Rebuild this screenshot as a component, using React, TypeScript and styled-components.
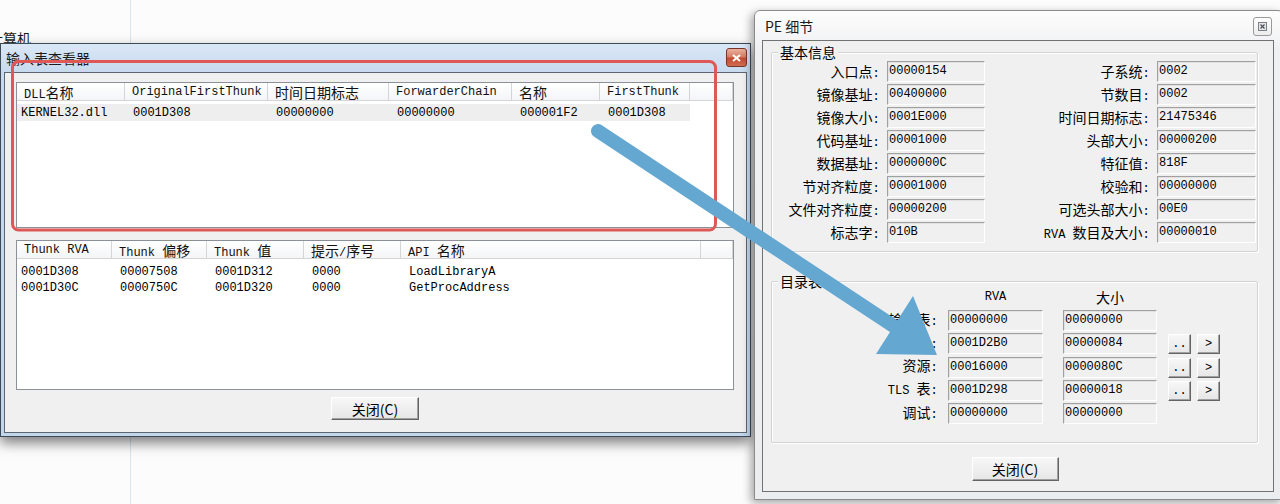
import React from 'react'
import styled, { createGlobalStyle } from 'styled-components'

const MONO = `'Liberation Mono', 'Noto Sans CJK SC', monospace`
const CJK = `'Noto Sans CJK SC', 'Liberation Sans', sans-serif`

const GlobalStyle = createGlobalStyle`
  html, body {
    margin: 0;
    padding: 0;
    background: #fcfcfc;
    overflow: hidden;
  }
  body {
    font-family: ${CJK};
  }
`

const Desktop = styled.div`
  position: relative;
  width: 1280px;
  height: 504px;
  overflow: hidden;
  background: #fcfcfc;
  display: flex;
`

const Sidebar = styled.div`
  width: 131px;
  box-sizing: border-box;
  border-right: 1px solid #d9e4ef;
  padding-top: 30px;
`

const TreeText = styled.div`
  margin-left: -11px;
  font: 14px/16px ${CJK};
  color: #1a1a1a;
`

const CjkRun = styled.span`
  font-family: ${CJK};
  font-size: 14px;
`

const mixed = (text: string) =>
  text.split(/([\u3400-\u9fff]+)/).map((part, i) =>
    /[\u3400-\u9fff]/.test(part) ? <CjkRun key={i}>{part}</CjkRun> : part
  )

/* ---------- import viewer window ---------- */

const ImportWindow = styled.div`
  position: absolute;
  left: 0;
  top: 43px;
  z-index: 1;
  width: 751px;
  height: 394px;
  box-sizing: border-box;
  border: 1px solid #3e4a56;
  background: linear-gradient(#dae7f6, #c6d9ee 30px, #c2d6ec);
  box-shadow: 0 6px 12px rgba(0, 0, 0, 0.5);
  padding: 0 3px 3px 3px;
  display: flex;
  flex-direction: column;
`

const TitleBar = styled.div<{ $h: number }>`
  height: ${p => p.$h}px;
  flex: none;
  display: flex;
  align-items: center;
`

const TitleText = styled.span<{ $pad: number }>`
  padding-left: ${p => p.$pad}px;
  font: 14px/16px ${CJK};
  color: #1b1b1b;
`

const RedClose = styled.div`
  margin-left: auto;
  align-self: flex-start;
  margin-top: 4px;
  width: 21px;
  height: 19px;
  box-sizing: border-box;
  border: 1px solid #7a3426;
  border-radius: 3px;
  background: linear-gradient(#eab09c, #d67b63 48%, #c2492f 52%, #cf6d52);
  display: flex;
  align-items: center;
  justify-content: center;
`

const GreyClose = styled.div`
  margin-left: auto;
  margin-right: 2px;
  align-self: flex-start;
  margin-top: 6px;
  width: 19px;
  height: 19px;
  box-sizing: border-box;
  border: 1px solid #9a9a9a;
  border-radius: 3px;
  background: linear-gradient(#ffffff, #ececec);
  display: flex;
  align-items: center;
  justify-content: center;
`

const ImportClient = styled.div`
  flex: 1;
  background: #f0f0f0;
  border: 1px solid #5c6670;
  padding: 9px 12px 10px 11px;
  display: flex;
  flex-direction: column;
`

const ListView = styled.div<{ $h: number; $mt?: number }>`
  height: ${p => p.$h}px;
  margin-top: ${p => p.$mt ?? 0}px;
  flex: none;
  box-sizing: border-box;
  border: 1px solid #8c9098;
  background: #ffffff;
  overflow: hidden;
`

const HeaderRow = styled.div`
  display: flex;
  height: 18px;
  box-sizing: border-box;
  border-bottom: 1px solid #d5d5d5;
  background: linear-gradient(#ffffff, #f4f5f7);
`

const HeaderCell = styled.div<{ $w?: number }>`
  ${p => (p.$w ? `width: ${p.$w}px;` : 'flex: 1;')}
  flex-shrink: 0;
  box-sizing: border-box;
  border-right: 1px solid #d5d5d5;
  padding: 2px 0 0 7px;
  font: 12px/15px ${MONO};
  color: #111;
  white-space: pre;
`

const DataRow = styled.div<{ $sel?: boolean; $h: number; $mt: number }>`
  display: flex;
  width: max-content;
  height: ${p => p.$h}px;
  margin-top: ${p => p.$mt}px;
  background: ${p => (p.$sel ? '#eeeeee' : 'transparent')};
`

const DataCell = styled.div<{ $w: number; $pad: number }>`
  width: ${p => p.$w}px;
  box-sizing: border-box;
  padding: 2px 0 0 ${p => p.$pad}px;
  font: 12px/15px ${MONO};
  color: #000;
  white-space: nowrap;
`

const DialogButton = styled.button<{ $w: number; $h: number; $mt: number }>`
  width: ${p => p.$w}px;
  height: ${p => p.$h}px;
  margin-top: ${p => p.$mt}px;
  align-self: center;
  flex: none;
  padding: 0;
  box-sizing: border-box;
  font: 14px/16px ${CJK};
  color: #000;
  background: linear-gradient(#f7f7f7, #e6e6e6);
  border: 1px solid;
  border-color: #ffffff #646464 #646464 #ffffff;
  box-shadow: inset -1px -1px 0 #a0a0a0;
`

/* ---------- PE detail window ---------- */

const DetailWindow = styled.div`
  position: absolute;
  left: 754px;
  top: 10px;
  z-index: 2;
  width: 530px;
  height: 490px;
  box-sizing: border-box;
  border: 1px solid #8a8a8a;
  border-radius: 6px 6px 0 0;
  background: linear-gradient(#fdfdfd, #eff0f2 40px, #ebedef);
  box-shadow: -3px 3px 10px rgba(0, 0, 0, 0.35);
  padding: 0 9px 7px 7px;
  display: flex;
  flex-direction: column;
`

const DetailClient = styled.div`
  flex: 1;
  background: #f0f0f0;
  border: 1px solid #727272;
  padding: 11px 14px 0 8px;
  display: flex;
  flex-direction: column;
`

const GroupBox = styled.div<{ $h: number; $mt: number }>`
  position: relative;
  width: 487px;
  height: ${p => p.$h}px;
  margin-top: ${p => p.$mt}px;
  flex: none;
  box-sizing: border-box;
  border: 1px solid #d3d3d3;
  border-radius: 2px;
  box-shadow: inset 1px 1px 0 #ffffff, 1px 1px 0 #ffffff;
`

const GroupTitle = styled.span`
  position: absolute;
  top: -10px;
  left: 6px;
  padding: 0 2px;
  background: #f0f0f0;
  font: 14px/18px ${CJK};
  color: #000;
`

const InfoGrid = styled.div`
  display: grid;
  grid-template-columns: 115px 98px 172px 99px;
  grid-auto-rows: 21px;
  row-gap: 2px;
  padding-top: 8px;
`

const FieldLabel = styled.div<{ $w?: number; $pad?: number }>`
  ${p => (p.$w ? `width: ${p.$w}px; flex: none;` : '')}
  box-sizing: border-box;
  padding-right: ${p => p.$pad ?? 0}px;
  text-align: right;
  font: 12px/21px ${MONO};
  color: #000;
  white-space: pre;
`

const Field = styled.div<{ $w?: number; $ml?: number }>`
  ${p => (p.$w ? `width: ${p.$w}px; flex: none;` : '')}
  margin-left: ${p => p.$ml ?? 0}px;
  height: 21px;
  box-sizing: border-box;
  border: 1px solid;
  border-color: #a0a0a0 #ffffff #ffffff #a0a0a0;
  box-shadow: inset 1px 1px 0 #e2e2e2;
  background: #f0f0f0;
  padding-left: 1px;
  font: 12px/19px ${MONO};
  color: #000;
  white-space: nowrap;
`

const DirTable = styled.div`
  display: flex;
  flex-direction: column;
  padding-top: 6px;
`

const DirHeader = styled.div`
  display: flex;
  height: 18px;
  margin-bottom: 4px;
`

const ColHead = styled.div<{ $w: number; $ml?: number }>`
  width: ${p => p.$w}px;
  margin-left: ${p => p.$ml ?? 0}px;
  text-align: center;
  font: 12px/18px ${MONO};
  color: #000;
`

const DirRows = styled.div`
  display: flex;
  flex-direction: column;
  gap: 2.25px;
`

const DirRow = styled.div`
  display: flex;
  align-items: center;
  height: 21px;
`

const RowButtons = styled.div`
  display: flex;
  gap: 6px;
  margin-left: 11px;
  margin-top: 1px;
`

const SmallButton = styled.div`
  width: 23px;
  height: 20px;
  box-sizing: border-box;
  border: 1px solid;
  border-color: #ffffff #646464 #646464 #ffffff;
  box-shadow: inset -1px -1px 0 #a0a0a0;
  background: linear-gradient(#f7f7f7, #e6e6e6);
  font: 12px/18px ${MONO};
  text-align: center;
  color: #000;
`

/* ---------- annotation overlay ---------- */

const Overlay = styled.svg`
  position: absolute;
  left: 0;
  top: 0;
  z-index: 3;
  pointer-events: none;
`

const dllCols = [108, 143, 121, 123, 88, 90]
const thunkCols = [95, 95, 97, 97, 300]

const infoRows: [string, string, string, string][] = [
  ['入口点: ', '00000154', '子系统: ', '0002'],
  ['镜像基址: ', '00400000', '节数目: ', '0002'],
  ['镜像大小: ', '0001E000', '时间日期标志: ', '21475346'],
  ['代码基址: ', '00001000', '头部大小: ', '00000200'],
  ['数据基址: ', '0000000C', '特征值: ', '818F'],
  ['节对齐粒度: ', '00001000', '校验和: ', '00000000'],
  ['文件对齐粒度: ', '00000200', '可选头部大小: ', '00E0'],
  ['标志字: ', '010B', 'RVA 数目及大小: ', '00000010'],
]

const dirRows: [string, string, string, boolean][] = [
  ['输出表: ', '00000000', '00000000', false],
  ['输入表: ', '0001D2B0', '00000084', true],
  ['资源: ', '00016000', '0000080C', true],
  ['TLS 表: ', '0001D298', '00000018', true],
  ['调试: ', '00000000', '00000000', false],
]

const thunks = [
  ['0001D308', '00007508', '0001D312', '0000', 'LoadLibraryA'],
  ['0001D30C', '0000750C', '0001D320', '0000', 'GetProcAddress'],
]

const App = () => (
  <>
    <GlobalStyle />
    <Desktop>
      <Sidebar>
        <TreeText>计算机</TreeText>
      </Sidebar>

      <ImportWindow>
        <TitleBar $h={28}>
          <TitleText $pad={2}>输入表查看器</TitleText>
          <RedClose>
            <svg width="9" height="8" viewBox="0 0 9 8">
              <path d="M1 1 L8 7 M8 1 L1 7" stroke="#ffffff" strokeWidth="2" />
            </svg>
          </RedClose>
        </TitleBar>
        <ImportClient>
          <ListView $h={146}>
            <HeaderRow>
              {['DLL名称', 'OriginalFirstThunk', '时间日期标志', 'ForwarderChain', '名称', 'FirstThunk'].map((h, i) => (
                <HeaderCell key={h} $w={dllCols[i]}>{mixed(h)}</HeaderCell>
              ))}
              <HeaderCell />
            </HeaderRow>
            <DataRow $sel $h={17} $mt={3}>
              {['KERNEL32.dll', '0001D308', '00000000', '00000000', '000001F2', '0001D308'].map((v, i) => (
                <DataCell key={i} $w={dllCols[i]} $pad={i === 0 ? 4 : 8}>{v}</DataCell>
              ))}
            </DataRow>
          </ListView>

          <ListView $h={150} $mt={12}>
            <HeaderRow>
              {['Thunk RVA', 'Thunk 偏移', 'Thunk 值', '提示/序号', 'API 名称'].map((h, i) => (
                <HeaderCell key={h} $w={thunkCols[i]}>{mixed(h)}</HeaderCell>
              ))}
              <HeaderCell />
            </HeaderRow>
            {thunks.map((row, r) => (
              <DataRow key={r} $h={16} $mt={r === 0 ? 4 : 0}>
                {row.map((v, i) => (
                  <DataCell key={i} $w={thunkCols[i]} $pad={i === 0 ? 4 : 8}>{v}</DataCell>
                ))}
              </DataRow>
            ))}
          </ListView>

          <DialogButton $w={88} $h={23} $mt={7}>关闭(C)</DialogButton>
        </ImportClient>
      </ImportWindow>

      <DetailWindow>
        <TitleBar $h={29}>
          <TitleText $pad={3}>PE 细节</TitleText>
          <GreyClose>
            <svg width="9" height="9" viewBox="0 0 9 9">
              <rect x="0.5" y="0.5" width="8" height="8" fill="#e4e6ea" stroke="#7d7f86" />
              <path d="M2.5 2.5 L6.5 6.5 M6.5 2.5 L2.5 6.5" stroke="#4e5058" strokeWidth="1.2" />
            </svg>
          </GreyClose>
        </TitleBar>
        <DetailClient>
          <GroupBox $h={200} $mt={0}>
            <GroupTitle>基本信息</GroupTitle>
            <InfoGrid>
              {infoRows.map(([l1, v1, l2, v2]) => (
                <React.Fragment key={l1}>
                  <FieldLabel>{mixed(l1)}</FieldLabel>
                  <Field>{v1}</Field>
                  <FieldLabel>{mixed(l2)}</FieldLabel>
                  <Field>{v2}</Field>
                </React.Fragment>
              ))}
            </InfoGrid>
          </GroupBox>

          <GroupBox $h={162} $mt={29}>
            <GroupTitle>目录表</GroupTitle>
            <DirTable>
              <DirHeader>
                <FieldLabel $w={176} />
                <ColHead $w={95}>RVA</ColHead>
                <ColHead $w={94} $ml={20}><CjkRun>大小</CjkRun></ColHead>
              </DirHeader>
              <DirRows>
                {dirRows.map(([label, rva, size, more]) => (
                  <DirRow key={label}>
                    <FieldLabel $w={176} $pad={3}>{mixed(label)}</FieldLabel>
                    <Field $w={95}>{rva}</Field>
                    <Field $w={94} $ml={20}>{size}</Field>
                    {more && (
                      <RowButtons>
                        <SmallButton>..</SmallButton>
                        <SmallButton>&gt;</SmallButton>
                      </RowButtons>
                    )}
                  </DirRow>
                ))}
              </DirRows>
            </DirTable>
          </GroupBox>

          <DialogButton $w={87} $h={24} $mt={14}>关闭(C)</DialogButton>
        </DetailClient>
      </DetailWindow>

      <Overlay width="1280" height="504" viewBox="0 0 1280 504">
        <rect x="12.5" y="61.5" width="703" height="168.5" rx="6" fill="none" stroke="#de5858" strokeWidth="3" />
        <line x1="598" y1="131" x2="898" y2="329" stroke="#64a8d2" strokeWidth="14" strokeLinecap="round" />
        <polygon points="913,296 876,354 937,355" fill="#64a8d2" />
      </Overlay>
    </Desktop>
  </>
)

export default App
